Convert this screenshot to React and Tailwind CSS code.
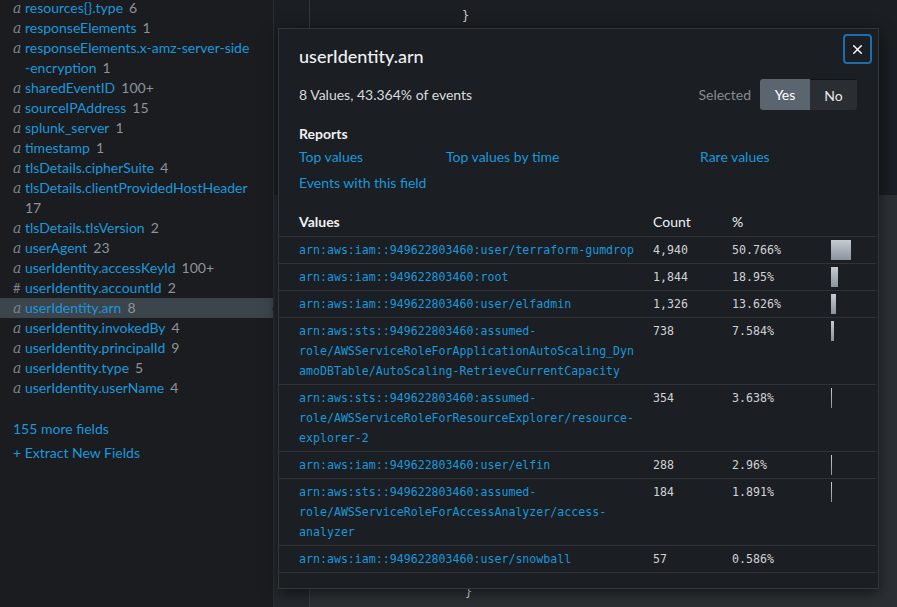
import React from 'react';
import { X } from 'lucide-react';

const sans = { fontFamily: 'Lato, "Open Sans", sans-serif' };
const mono = { fontFamily: '"DejaVu Sans Mono", "Liberation Mono", monospace' };

// sidebar field list: [type, name, count]
const fields = [
    ['a', 'resources{}.type', '6'],
    ['a', 'responseElements', '1'],
    ['a', 'responseElements.x-amz-server-side -encryption', '1'],
    ['a', 'sharedEventID', '100+'],
    ['a', 'sourceIPAddress', '15'],
    ['a', 'splunk_server', '1'],
    ['a', 'timestamp', '1'],
    ['a', 'tlsDetails.cipherSuite', '4'],
    ['a', 'tlsDetails.clientProvidedHostHeader', '17'],
    ['a', 'tlsDetails.tlsVersion', '2'],
    ['a', 'userAgent', '23'],
    ['a', 'userIdentity.accessKeyId', '100+'],
    ['#', 'userIdentity.accountId', '2'],
    ['a', 'userIdentity.arn', '8', true],
    ['a', 'userIdentity.invokedBy', '4'],
    ['a', 'userIdentity.principalId', '9'],
    ['a', 'userIdentity.type', '5'],
    ['a', 'userIdentity.userName', '4'],
];

const values = [
    ['arn:aws:iam::949622803460:user/terraform-gumdrop', '4,940', '50.766%', 50.766],
    ['arn:aws:iam::949622803460:root', '1,844', '18.95%', 18.95],
    ['arn:aws:iam::949622803460:user/elfadmin', '1,326', '13.626%', 13.626],
    ['arn:aws:sts::949622803460:assumed-role/AWSServiceRoleForApplicationAutoScaling_DynamoDBTable/AutoScaling-RetrieveCurrentCapacity', '738', '7.584%', 7.584],
    ['arn:aws:sts::949622803460:assumed-role/AWSServiceRoleForResourceExplorer/resource-explorer-2', '354', '3.638%', 3.638],
    ['arn:aws:iam::949622803460:user/elfin', '288', '2.96%', 2.96],
    ['arn:aws:sts::949622803460:assumed-role/AWSServiceRoleForAccessAnalyzer/access-analyzer', '184', '1.891%', 1.891],
    ['arn:aws:iam::949622803460:user/snowball', '57', '0.586%', 0.586],
];

const Sidebar = () => (
    <div className="w-[274px] shrink-0 h-full bg-[#1a1c20] border-r border-[#2c3035] overflow-hidden" style={sans}>
        <ul className="mt-[-2px] text-[14px] leading-[20px]">
            {fields.map(([t, name, count, sel]) => (
                <li key={name} className={`flex pl-[13px] pr-2 ${sel ? 'bg-[#3c444c]' : ''}`}>
                    <span
                        className={`w-[12px] shrink-0 text-[#7c838b] ${t === 'a' ? 'italic' : 'text-[13px]'}`}
                        style={{ fontFamily: t === 'a' ? '"DejaVu Serif", serif' : 'Lato, sans-serif' }}
                    >
                        {t}
                    </span>
                    <span className="w-[236px]">
                        {name.includes(' ') ? (
                            <>
                                <span className="text-[#1a98db]">{name.split(' ')[0]}</span>
                                <br />
                                <span className="text-[#1a98db]">{name.split(' ')[1]}</span>
                                <span className="text-[#8d939a] ml-[6px]">{count}</span>
                            </>
                        ) : name === 'tlsDetails.clientProvidedHostHeader' ? (
                            <>
                                <span className="text-[#1a98db]">{name}</span>
                                <br />
                                <span className="text-[#8d939a]">{count}</span>
                            </>
                        ) : (
                            <>
                                <span className="text-[#1a98db]">{name}</span>
                                <span className="text-[#8d939a] ml-[6px]">{count}</span>
                            </>
                        )}
                    </span>
                </li>
            ))}
        </ul>
        <div className="pl-[13px] mt-[21px] text-[14px] leading-[20px] text-[#1a98db]">155 more fields</div>
        <div className="pl-[13px] mt-[4px] text-[14px] leading-[20px] text-[#1a98db]">+ Extract New Fields</div>
    </div>
);

const Modal = () => (
    <div
        className="absolute left-[278px] top-[28px] w-[601px] h-[561px] bg-[#1b1e22] border border-[#33373c] shadow-[0_4px_14px_rgba(0,0,0,0.55)]"
        style={sans}
    >
        {/* pointer toward selected field */}
        <div className="absolute left-[-7px] top-[274px] w-0 h-0 border-y-[6px] border-y-transparent border-r-[6px] border-r-[#1b1e22]" />
        <button
            type="button"
            className="absolute right-[6px] top-[5px] w-[29px] h-[30px] rounded-[4px] border-2 border-[#1b6fae] flex items-center justify-center text-white"
        >
            <X className="w-[15px] h-[15px]" strokeWidth={2.2} />
        </button>

        <div className="px-[20px] pt-[15px]">
            <h2 className="text-[18px] leading-[24px] text-[#eef0f2] font-medium">userIdentity.arn</h2>
            <div className="mt-[11px] flex items-center justify-between pr-[1px]">
                <span className="text-[14px] text-[#d8dbde]">8 Values, 43.364% of events</span>
                <div className="flex items-center">
                    <span className="text-[14px] text-[#858c94] mr-[9px]">Selected</span>
                    <div className="flex rounded-[3px] overflow-hidden text-[14px]">
                        <span className="w-[50px] h-[31px] flex items-center justify-center bg-[#5b6570] text-white">Yes</span>
                        <span className="w-[47px] h-[31px] flex items-center justify-center bg-[#2a2e32] border-t border-[#101214] text-[#e8eaec]">No</span>
                    </div>
                </div>
            </div>

            <div className="mt-[14px] text-[14px] font-bold text-[#eef0f2] leading-[20px]">Reports</div>
            <div className="mt-[3px] grid grid-cols-[147px_254px_1fr] text-[14px] leading-[20px] text-[#1a98db]">
                <span>Top values</span>
                <span>Top values by time</span>
                <span>Rare values</span>
            </div>
            <div className="mt-[6px] text-[14px] leading-[20px] text-[#1a98db]">Events with this field</div>
        </div>

        <div className="mt-[19px] mr-[2px]">
            <div className="grid grid-cols-[374px_79px_99px_1fr] border-b border-[#2f3338] pb-[4px] text-[14px] font-bold text-[#eef0f2] leading-[20px]">
                <span className="pl-[20px]">Values</span>
                <span className="font-normal">Count</span>
                <span className="font-normal">%</span>
                <span />
            </div>
            {values.map(([v, c, p, n]) => (
                <div
                    key={v}
                    className="grid grid-cols-[374px_79px_99px_1fr] border-b border-[#2f3338] py-[3px] text-[11.6px] leading-[20px]"
                    style={mono}
                >
                    <span className="pl-[20px] text-[#1a98db] [overflow-wrap:anywhere]">
                        <span className="block w-[339px]">{v}</span>
                    </span>
                    <span className="text-[#d0d3d6]">{c}</span>
                    <span className="text-[#d0d3d6]">{p}</span>
                    <span className="flex items-start">
                        <span
                            className="h-[20px] bg-gradient-to-b from-[#c7ccd3] to-[#8b939d]"
                            style={{ width: `${(n / 50.766) * 20}px` }}
                        />
                    </span>
                </div>
            ))}
        </div>
    </div>
);

export default function App() {
    return (
        <div className="relative w-[897px] h-[607px] flex overflow-hidden bg-[#1b1e22]">
            <Sidebar />
            <div className="flex-1 flex flex-col">
                <div className="h-[195px] flex bg-[#1b1e22]">
                    <div className="w-[36px] border-r border-[#33383d]" />
                    <div className="flex-1 relative text-[12px] text-[#c9ccd0]" style={mono}>
                        <div className="pl-[152px] pt-[7px] leading-[18px]">{'}'}</div>
                    </div>
                </div>
                <div className="flex-1 flex bg-[#2c3034]">
                    <div className="w-[36px] border-r border-[#383d42] bg-[#25292d]" />
                    <div className="flex-1 flex flex-col justify-end text-[12px] text-[#d4d6d9]" style={mono}>
                        <div className="pl-[155px] pb-[6px] leading-[18px]">{'}'}</div>
                    </div>
                </div>
            </div>
            <Modal />
        </div>
    );
}
